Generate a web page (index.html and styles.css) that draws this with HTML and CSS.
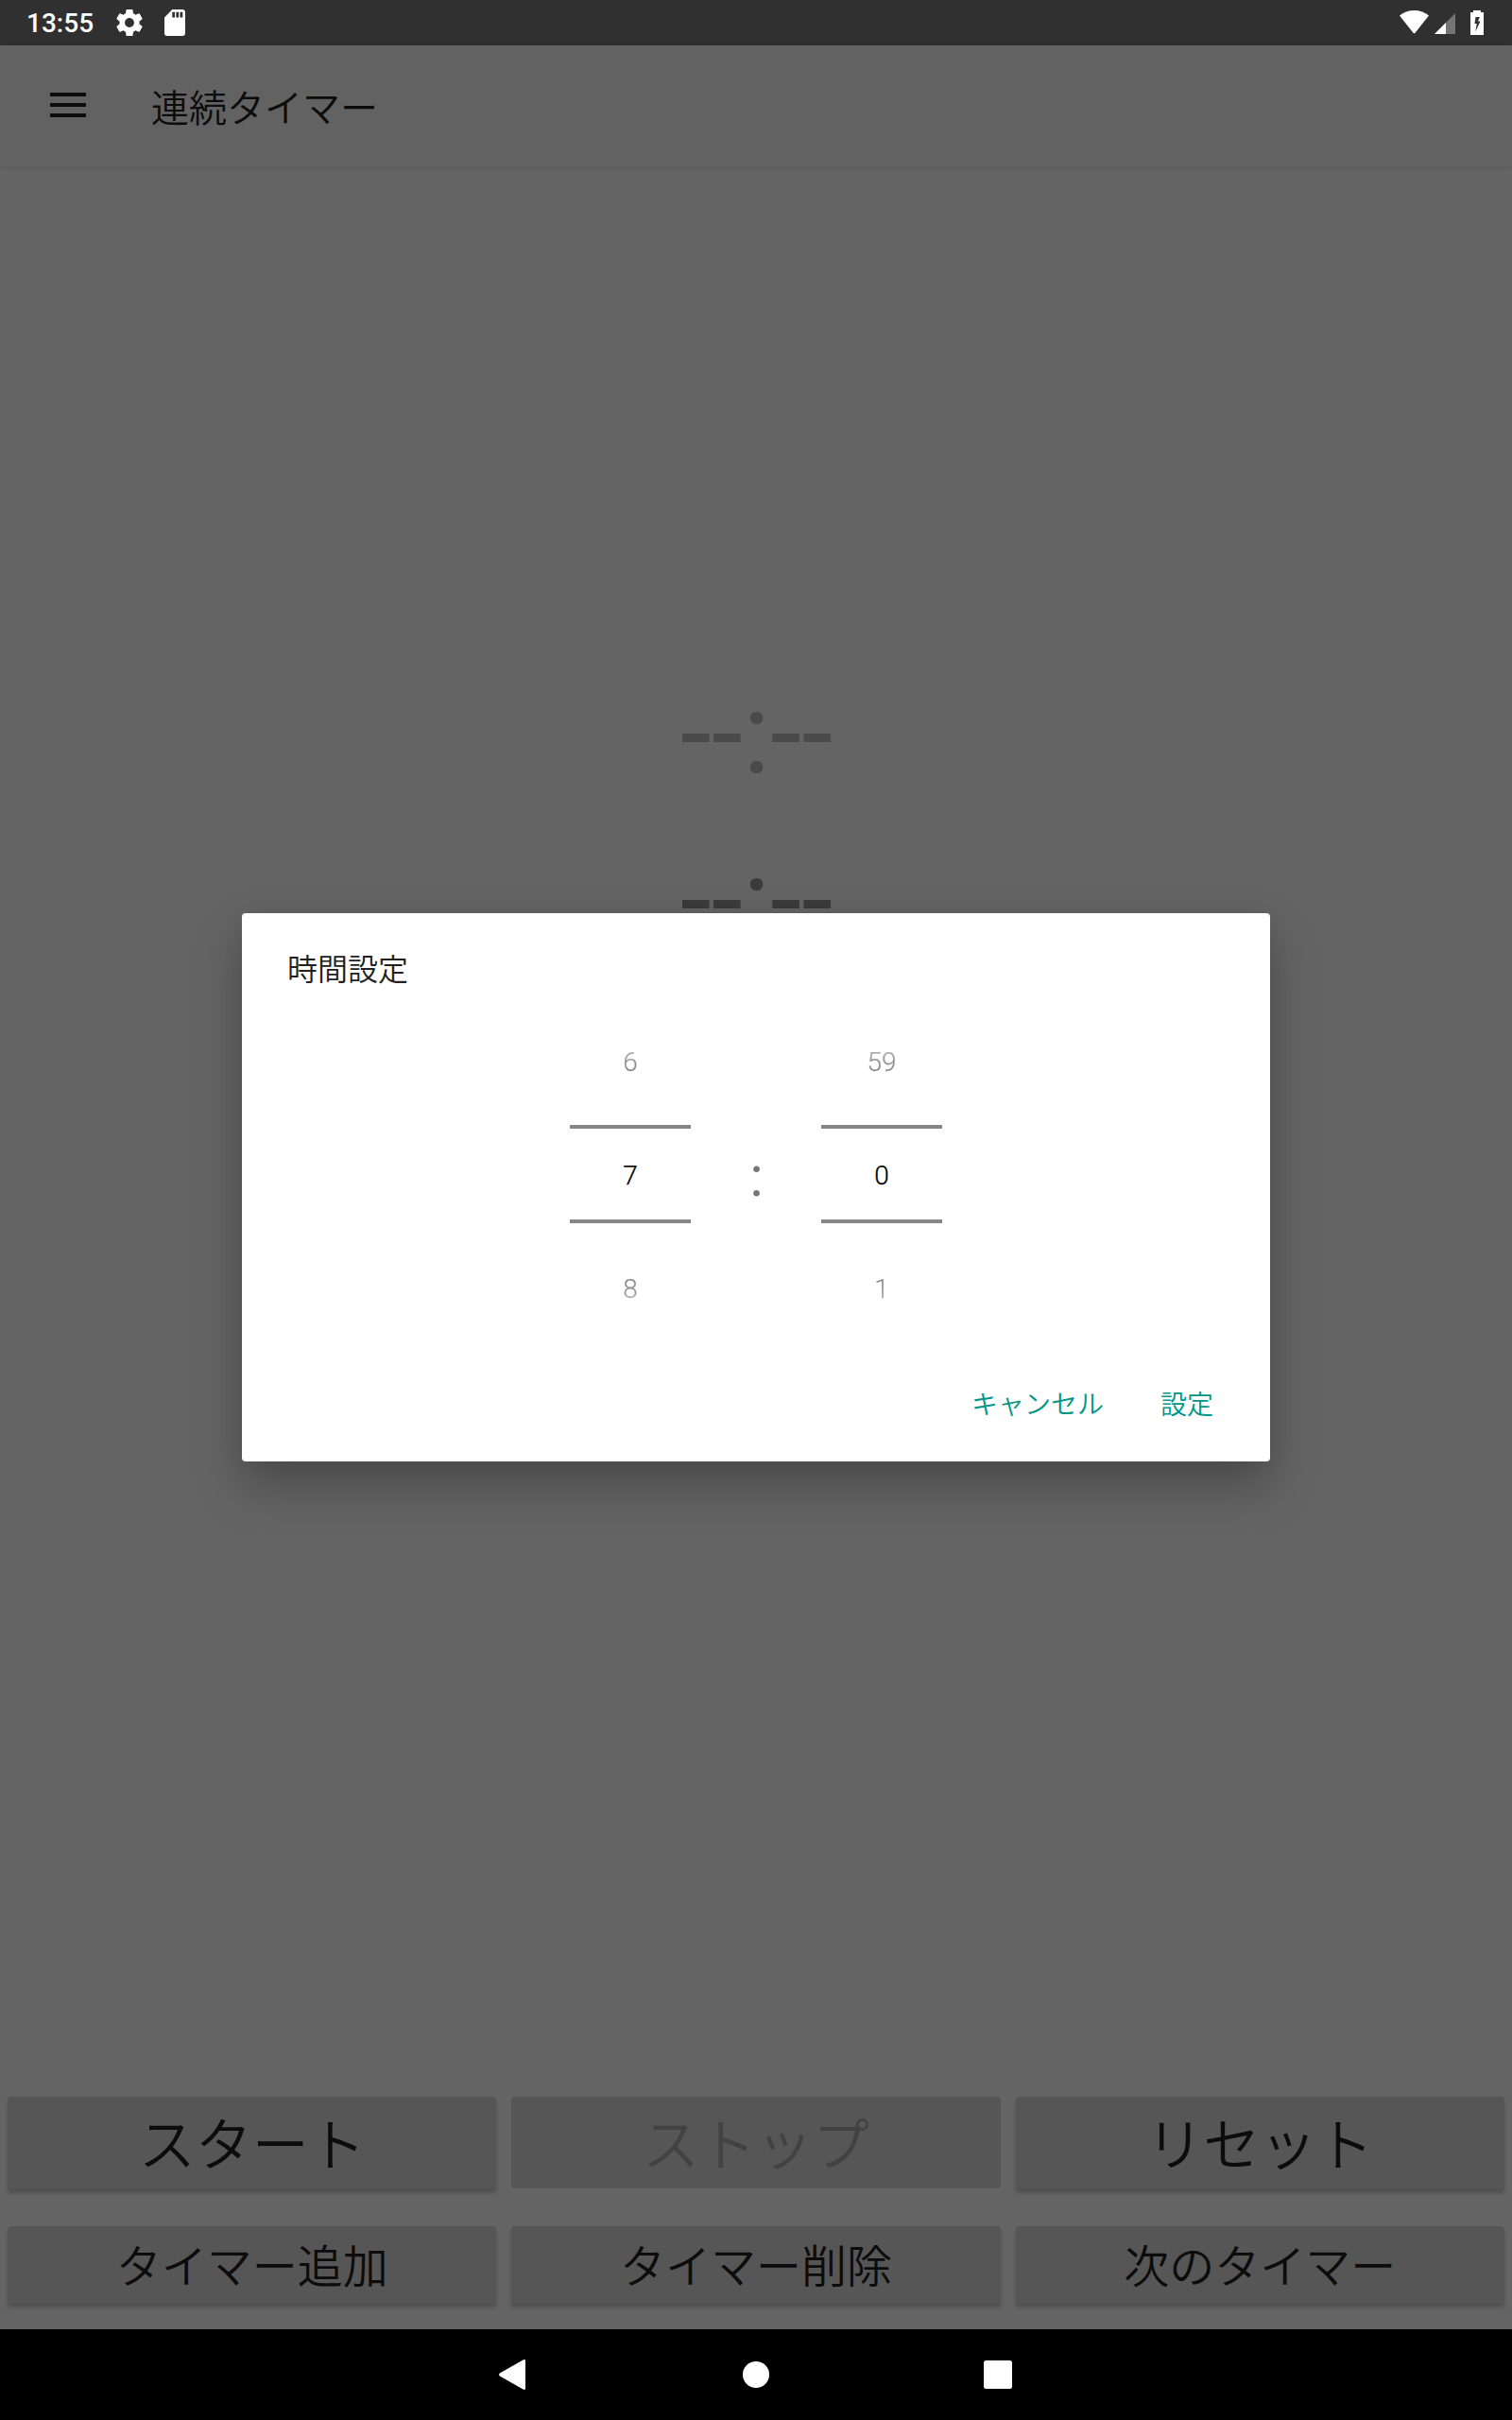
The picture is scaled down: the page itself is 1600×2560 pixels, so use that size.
FILE: index.html
```html
<!DOCTYPE html>
<html lang="ja">
<head>
<meta charset="utf-8">
<title>連続タイマー</title>
<link rel="stylesheet" href="styles.css">
</head>
<body>
<div class="screen">
  <header class="status">
    <span class="clock">13:55</span>
    <svg class="gear" viewBox="2 2 20 20" width="28" height="28"><path fill="#fff" d="M19.43 12.98c.04-.32.07-.64.07-.98s-.03-.66-.07-.98l2.11-1.65c.19-.15.24-.42.12-.64l-2-3.46c-.12-.22-.39-.3-.61-.22l-2.49 1c-.52-.4-1.08-.73-1.69-.98l-.38-2.65C14.46 2.18 14.25 2 14 2h-4c-.25 0-.46.18-.49.42l-.38 2.65c-.61.25-1.17.59-1.69.98l-2.49-1c-.23-.09-.49 0-.61.22l-2 3.46c-.13.22-.07.49.12.64l2.11 1.65c-.04.32-.07.65-.07.98s.03.66.07.98l-2.11 1.65c-.19.15-.24.42-.12.64l2 3.46c.12.22.39.3.61.22l2.49-1c.52.4 1.08.73 1.69.98l.38 2.65c.03.24.24.42.49.42h4c.25 0 .46-.18.49-.42l.38-2.65c.61-.25 1.17-.59 1.69-.98l2.49 1c.23.09.49 0 .61-.22l2-3.46c.12-.22.07-.49-.12-.64l-2.11-1.65zM12 15.5c-1.93 0-3.5-1.57-3.5-3.5s1.57-3.5 3.5-3.5 3.5 1.57 3.5 3.5-1.57 3.5-3.5 3.5z"/></svg>
    <svg class="card" viewBox="4 2 16 20" width="22" height="28" preserveAspectRatio="none"><path fill="#fff" d="M18 2h-8L4.02 8 4 20c0 1.100.9 2 2 2h12c1.100 0 2-.9 2-2V4c0-1.100-.9-2-2-2zm-6 6h-2V4h2v4zm3 0h-2V4h2v4zm3 0h-2V4h2v4z"/></svg>
    <svg class="wifi" viewBox="0 0 31 25" width="31" height="25"><path fill="#fff" d="M0 5.500C4 2 9.500 0 15.500 0S27 2 31 5.500L16.300 24q-.8.900-1.600 0z"/></svg>
    <svg class="signal" viewBox="0 0 22 22" width="22" height="22"><path fill="#757575" d="M22 0v22H0z"/><path fill="#fff" d="M12 10v12H0z"/></svg>
    <svg class="battery" viewBox="0 0 14 26" width="14" height="26"><path fill="#fff" fill-rule="evenodd" d="M3 0h8v2h3v24H0V2h3zM5.500 7L4.500 14h2.300l-1.500 8.500L10.500 11.500H7.800L10 7z"/></svg>
  </header>
  <div class="appbar">
    <svg viewBox="0 0 38 26" width="38" height="26"><path fill="#0c0c0c" d="M0 0h38v4H0zM0 11h38v4H0zM0 22h38v4H0z"/></svg>
    <h1>連続タイマー</h1>
  </div>
  <main class="content">
    <div class="timer timer-dim">--:--</div>
    <div class="timer">--:--</div>
  </main>
  <div class="buttons">
    <button class="big">スタート</button>
    <button class="big" disabled>ストップ</button>
    <button class="big">リセット</button>
    <button>タイマー追加</button>
    <button>タイマー削除</button>
    <button>次のタイマー</button>
  </div>
  <nav class="navbar">
    <svg viewBox="0 0 28 32" width="28" height="32"><path fill="#fff" d="M25.500.4Q28-.6 28 1.500v29q0 2.100-2.500 1.100L.8 17.400q-1.500-1.400 0-2.800z"/></svg>
    <svg viewBox="0 0 28 28" width="28" height="28"><circle cx="14" cy="14" r="14" fill="#fff"/></svg>
    <svg viewBox="0 0 30 30" width="30" height="30"><rect width="30" height="30" rx="2.500" fill="#fff"/></svg>
  </nav>
  <section class="dialog">
    <h2>時間設定</h2>
    <div class="pickers">
      <div class="picker">
        <span class="prev">6</span><span class="current">7</span><span class="next">8</span>
      </div>
      <span class="colon">:</span>
      <div class="picker">
        <span class="prev">59</span><span class="current">0</span><span class="next">1</span>
      </div>
    </div>
    <div class="actions"><a>キャンセル</a><a>設定</a></div>
  </section>
</div>
</body>
</html>
```
FILE: styles.css
```css
* { box-sizing: border-box; }
body { margin: 0; background: #000; font-family: Roboto, "Noto Sans CJK JP", sans-serif; }
svg { display: block; flex: none; }
h1, h2 { margin: 0; font-weight: 400; }

.screen {
  position: relative;
  display: flex;
  flex-direction: column;
  width: 1600px;
  height: 2560px;
  background: #646464;
  color: #0c0c0c;
}

.status {
  display: flex;
  align-items: flex-start;
  height: 48px;
  padding: 0 30px 0 28px;
  background: #303030;
  color: #fff;
}
.clock { width: 95px; font-size: 28px; font-weight: 500; line-height: 50px; }
.gear { margin-top: 10px; }
.card { margin: 10px 0 0 23px; }
.wifi { margin: 11px 6px 0 auto; }
.signal { margin: 14px 16px 0 0; }
.battery { margin-top: 11px; }

.appbar {
  display: flex;
  align-items: center;
  gap: 69px;
  height: 128px;
  padding-left: 53px;
  background: #626262;
  box-shadow: 0 1px 5px rgba(0, 0, 0, .12);
}
.appbar svg { margin-bottom: 2px; }
.appbar h1 { padding-top: 8px; font-size: 40px; line-height: 56px; font-weight: 350; }

.content { flex: 1; padding: 512px 0 0 1px; text-align: center; }
.timer { height: 176px; font-size: 120px; line-height: 176px; color: #3b3b3b; }
.timer-dim { color: #4a4a4a; }

.buttons {
  display: grid;
  grid-template-columns: repeat(3, 1fr);
  grid-template-rows: 97px 81px;
  gap: 40px 16px;
  padding: 0 8px 28px;
}
button {
  padding: 6px 0 0;
  border: 0;
  border-radius: 4px;
  background: #565656;
  color: #0c0c0c;
  font: 350 48px/72px Roboto, "Noto Sans CJK JP", sans-serif;
  box-shadow: 0 5px 4px rgba(0, 0, 0, .2);
}
.big { padding-top: 8px; font-size: 60px; }
button:disabled { color: #424242; box-shadow: none; }

.navbar {
  display: flex;
  align-items: center;
  height: 96px;
  padding-left: 528px;
  background: #000;
}
.navbar svg + svg { margin-left: 230px; }
.navbar svg:last-child { margin-left: 227px; }

.dialog {
  position: absolute;
  left: 256px;
  top: 966px;
  display: flex;
  flex-direction: column;
  width: 1088px;
  height: 580px;
  border-radius: 4px;
  background: #fff;
  color: #212121;
  box-shadow: 0 26px 50px rgba(0, 0, 0, .25), 0 2px 24px rgba(0, 0, 0, .05);
}
.dialog h2 { padding: 36px 48px 0; height: 97px; font-size: 32px; line-height: 48px; font-weight: 350; }
.pickers { display: flex; justify-content: center; height: 360px; }
.picker { display: flex; flex-direction: column; width: 128px; font-size: 28px; text-align: center; font-weight: 300; color: #000; -webkit-text-stroke: .25px #000; }
.prev, .next { height: 127px; line-height: 34px; }
.prev { padding-top: 44px; -webkit-mask-image: linear-gradient(transparent, #000 145px); }
.next { padding-top: 53px; height: 129px; -webkit-mask-image: linear-gradient(to top, transparent, #000 145px); }
.current { height: 104px; border: solid #868686; border-width: 4px 0; line-height: 100px; }
.colon { width: 138px; padding: 147px 0 0 1px; font-size: 60px; line-height: 70px; text-align: center; color: #757575; }
.actions { display: flex; justify-content: flex-end; gap: 60px; padding: 40px 60px 0 0; color: #009688; font-size: 28px; line-height: 48px; font-weight: 350; }
```
